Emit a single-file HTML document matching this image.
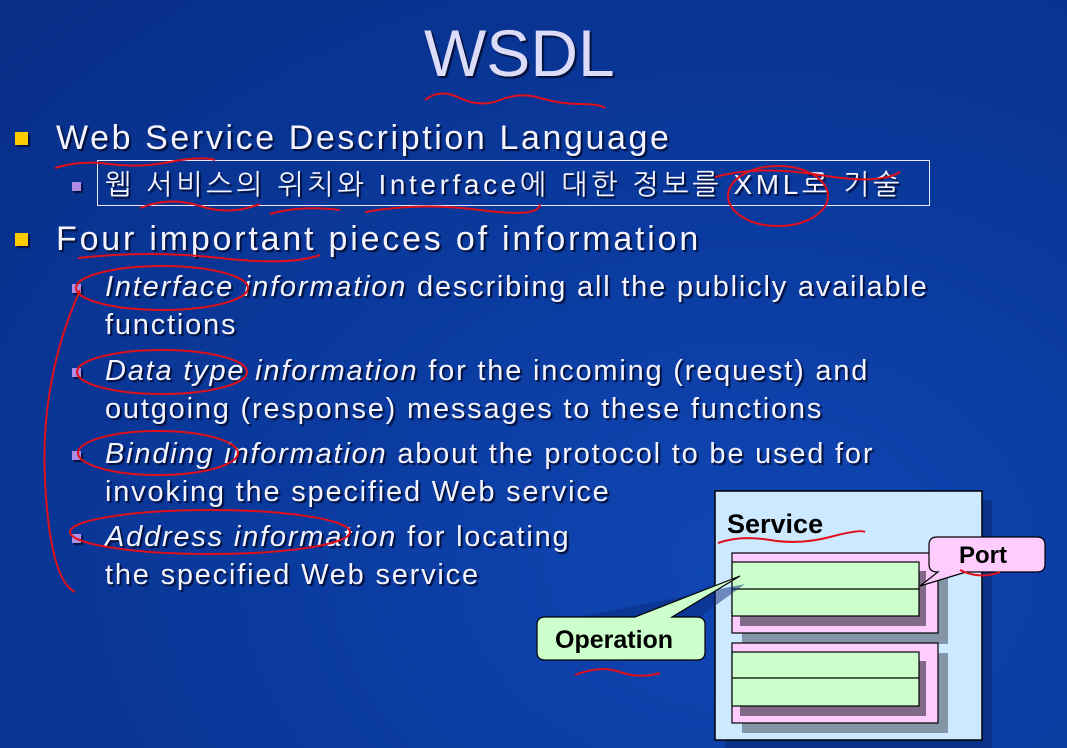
<!DOCTYPE html>
<html><head><meta charset="utf-8"><style>
body{margin:0;width:1067px;height:748px;overflow:hidden;background:radial-gradient(ellipse at 70% 75%,#1046b4 0%,#0a3a9e 45%,#082e86 100%);font-family:"Liberation Sans","NanumGothic",sans-serif;color:#f4f4ff;position:relative}
.t{position:absolute;white-space:nowrap;text-shadow:2px 2px 1px #02103a}
.sq{position:absolute;width:13px;height:13px;background:#ffcc00;box-shadow:2px 2px 1px #02103a}
.ps{position:absolute;width:9px;height:9px;background:#b08ce6;box-shadow:2px 2px 1px #02103a}
.l{font-size:29px;letter-spacing:1.8px}
i{font-style:italic}
</style></head><body>
<div class="t" style="left:424px;top:15px;font-size:66px;color:#dcdcf8">WSDL</div>
<div class="sq" style="left:15px;top:132px"></div>
<div class="t" style="left:56px;top:119px;font-size:34px;letter-spacing:2.6px">Web Service Description Language</div>
<div style="position:absolute;left:97px;top:160px;width:831px;height:44px;border:1px solid #e8e8ff"></div>
<div class="ps" style="left:72px;top:182px"></div>
<div class="t" style="left:105px;top:168px;font-size:28px;letter-spacing:3.6px">웹 서비스의 위치와 Interface에 대한 정보를 XML로 기술</div>
<div class="sq" style="left:15px;top:233px"></div>
<div class="t" style="left:56px;top:220px;font-size:34px;letter-spacing:2.8px">Four important pieces of information</div>
<div class="ps" style="left:72px;top:284px"></div>
<div class="t l" style="left:105px;top:271px"><i>Interface information</i> describing all the publicly available</div>
<div class="t l" style="left:105px;top:309px">functions</div>
<div class="ps" style="left:72px;top:368px"></div>
<div class="t l" style="left:105px;top:355px"><i>Data type information</i> for the incoming (request) and</div>
<div class="t l" style="left:105px;top:393px">outgoing (response) messages to these functions</div>
<div class="ps" style="left:72px;top:451px"></div>
<div class="t l" style="left:105px;top:438px"><i>Binding information</i> about the protocol to be used for</div>
<div class="t l" style="left:105px;top:476px">invoking the specified Web service</div>
<div class="ps" style="left:72px;top:534px"></div>
<div class="t l" style="left:105px;top:521px"><i>Address information</i> for locating</div>
<div class="t l" style="left:105px;top:559px">the specified Web service</div>

<svg style="position:absolute;left:0;top:0" width="1067" height="748">
<rect x="725" y="500" width="267" height="248" fill="#0a2a78" opacity=".6"/>
<rect x="715" y="491" width="267" height="249" fill="#cde9ff" stroke="#000" stroke-width="1.5"/>
<text x="727" y="533" font-family="Liberation Sans" font-weight="bold" font-size="27" fill="#000">Service</text>
<g>
<rect x="742" y="564" width="206" height="80" fill="#708090" opacity=".8"/>
<rect x="732" y="553" width="206" height="80" fill="#ffccff" stroke="#000" stroke-width="1.2"/>
<rect x="740" y="571" width="186" height="55" fill="#806a88"/>
<rect x="732" y="562" width="187" height="54" fill="#ccffcc" stroke="#000" stroke-width="1.2"/>
<line x1="732" y1="589" x2="919" y2="589" stroke="#000" stroke-width="1.2"/>
</g>
<g>
<rect x="742" y="653" width="206" height="80" fill="#708090" opacity=".8"/>
<rect x="732" y="643" width="206" height="80" fill="#ffccff" stroke="#000" stroke-width="1.2"/>
<rect x="740" y="661" width="186" height="55" fill="#806a88"/>
<rect x="732" y="652" width="187" height="54" fill="#ccffcc" stroke="#000" stroke-width="1.2"/>
<line x1="732" y1="678" x2="919" y2="678" stroke="#000" stroke-width="1.2"/>
</g>
<path d="M545 624 L745 584 L690 624 Z" fill="#0a2a78" opacity=".5"/>
<path d="M545 617 Q537 617 537 625 L537 652 Q537 660 545 660 L697 660 Q705 660 705 652 L705 625 Q705 617 697 617 L672 617 L740 576 L635 617 Z" fill="#ccffcc" stroke="#000" stroke-width="1.2"/>
<text x="555" y="648" font-family="Liberation Sans" font-weight="bold" font-size="25" fill="#000">Operation</text>
<path d="M937 537 Q929 537 929 545 L929 564 Q929 572 937 572 L938 572 L920 586 L966 572 L1037 572 Q1045 572 1045 564 L1045 545 Q1045 537 1037 537 Z" fill="#ffccff" stroke="#000" stroke-width="1.2"/>
<text x="959" y="563" font-family="Liberation Sans" font-weight="bold" font-size="24" fill="#000">Port</text>
<g fill="none" stroke="#e0101a" stroke-width="2">
<path d="M425 100 Q440 88 460 98 T500 100 T540 98 T580 104 T605 108"/>
<path d="M55 168 Q80 160 110 164 T170 162 T215 160"/>
<path d="M140 208 Q170 196 200 206 T260 204"/>
<path d="M270 214 Q300 205 340 210"/>
<path d="M365 212 Q420 202 480 210 T540 204"/>
<ellipse cx="778" cy="196" rx="50" ry="30"/>
<path d="M715 177 Q760 165 820 175 T900 172"/>
<ellipse cx="162" cy="288" rx="86" ry="22"/>
<path d="M78 258 Q150 250 220 258 T320 255"/>
<path d="M80 290 Q40 380 45 480 T75 592"/>
<ellipse cx="162" cy="372" rx="85" ry="22"/>
<ellipse cx="158" cy="453" rx="80" ry="22"/>
<ellipse cx="210" cy="532" rx="140" ry="22"/>
<path d="M718 543 Q740 535 770 540 T830 537 T865 532"/>
<path d="M575 675 Q600 665 620 672 T660 673"/>
<path d="M960 570 Q980 580 1000 572"/>
</g>
</svg>
</body></html>
